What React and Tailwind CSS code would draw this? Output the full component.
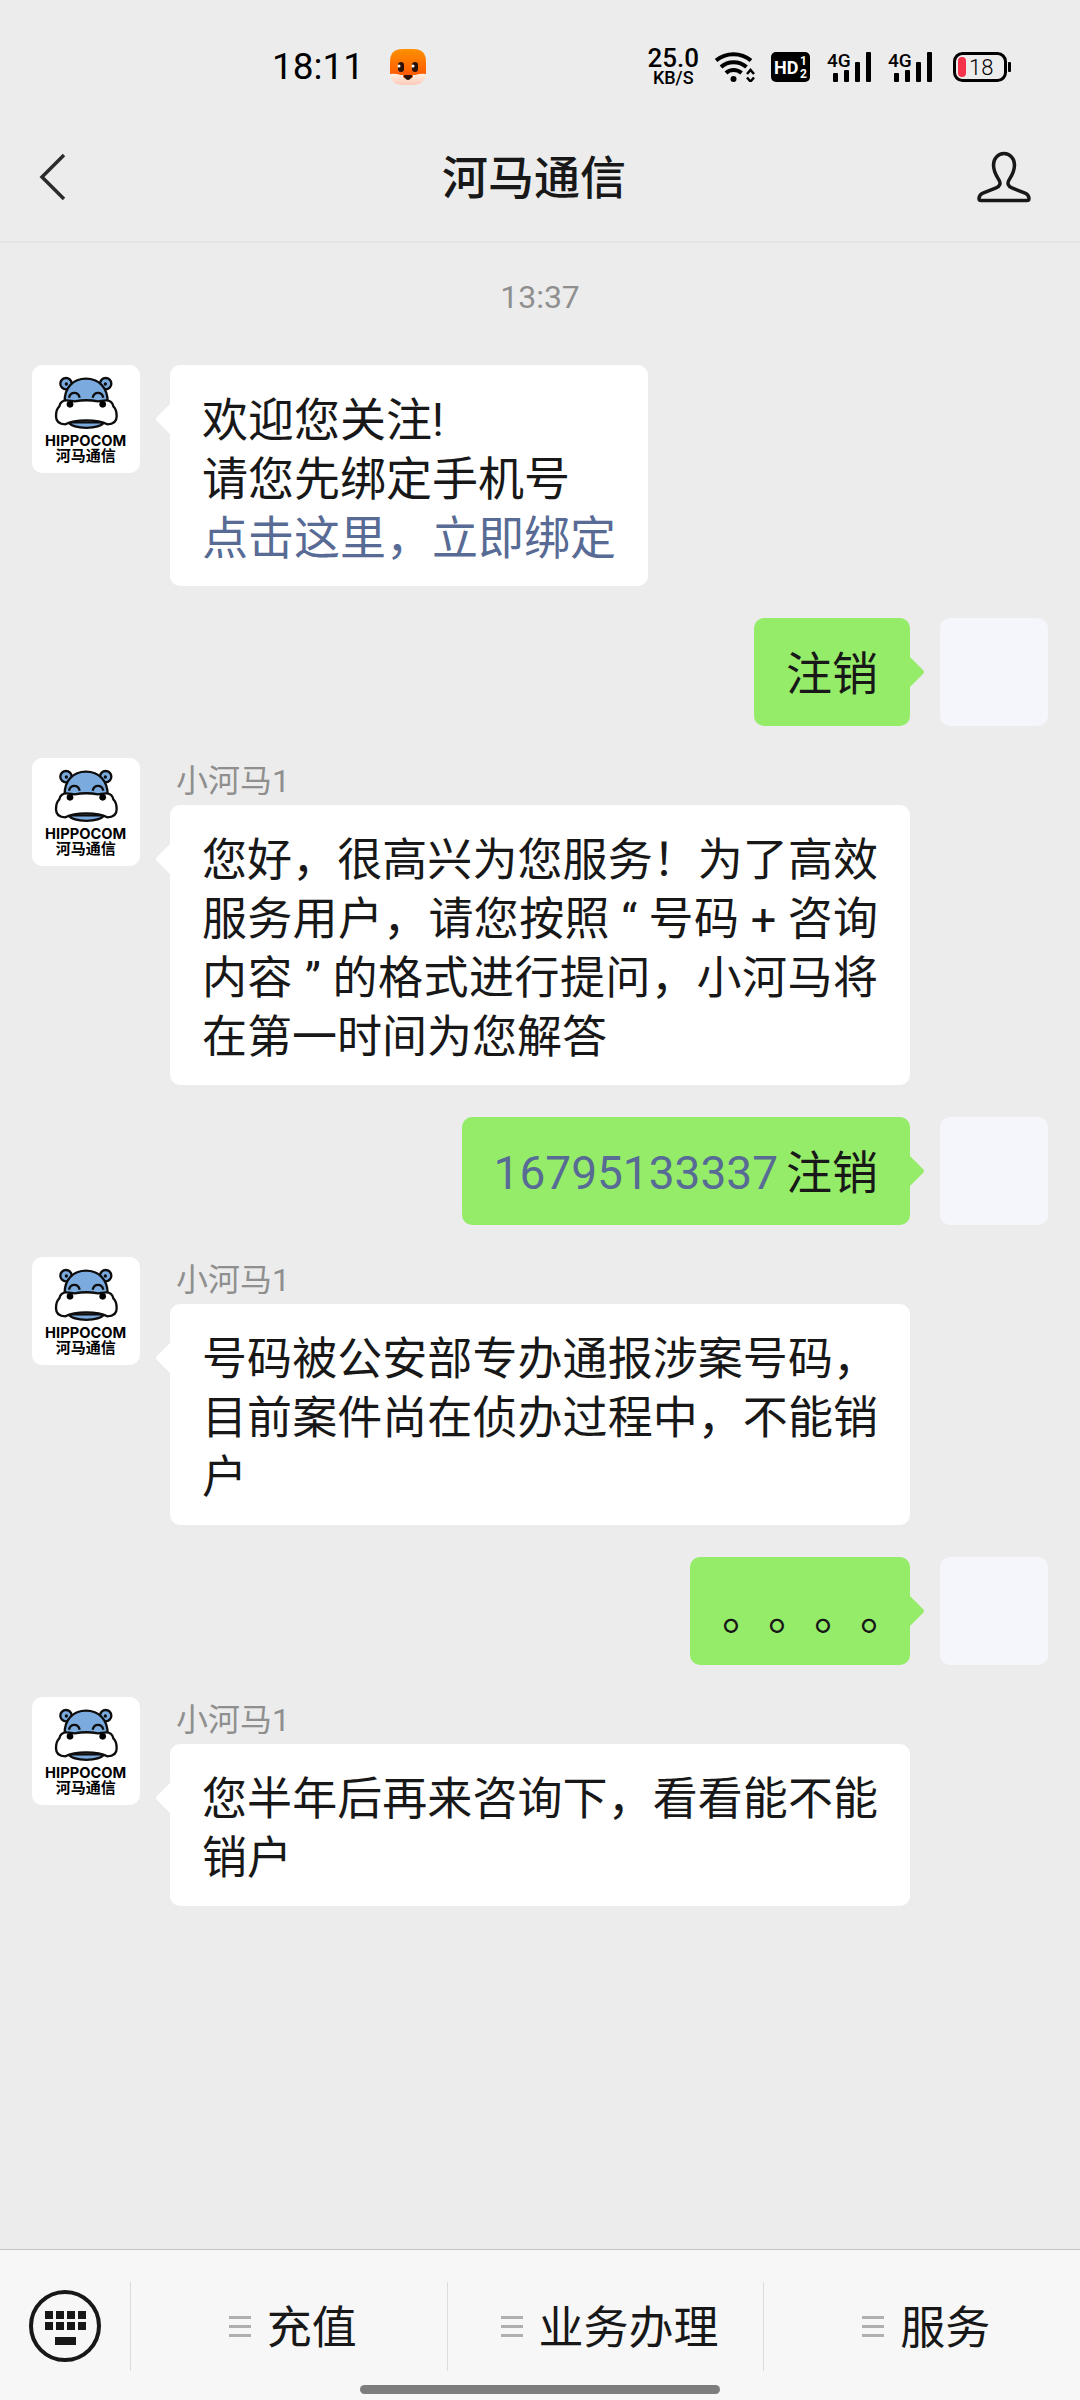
const messages = [
  { id: 1, from: "bot", lines: ["欢迎您关注!", "请您先绑定手机号"], link: "点击这里，立即绑定" },
  { id: 2, from: "me", text: "注销" },
  {
    id: 3,
    from: "bot",
    name: "小河马1",
    text: "您好，很高兴为您服务！为了高效服务用户，请您按照\u00a0“\u00a0号码\u00a0+\u00a0咨询内容\u00a0”\u00a0的格式进行提问，小河马将在第一时间为您解答",
  },
  { id: 4, from: "me", phone: "16795133337", text: "注销" },
  {
    id: 5,
    from: "bot",
    name: "小河马1",
    text: "号码被公安部专办通报涉案号码，目前案件尚在侦办过程中，不能销户",
  },
  { id: 6, from: "me", dots: "。。。。" },
  { id: 7, from: "bot", name: "小河马1", text: "您半年后再来咨询下，看看能不能销户" },
];

const menus = ["充值", "业务办理", "服务"];

const FoxIcon = () => (
  <svg className="size-9" viewBox="0 0 36 36">
    <defs>
      <linearGradient id="fox" x1="0" y1="0" x2="0" y2="1">
        <stop offset="0" stopColor="#ff9000" />
        <stop offset="1" stopColor="#ff5a00" />
      </linearGradient>
      <linearGradient id="cheek" x1="0" y1="0" x2="0" y2="1">
        <stop offset="0" stopColor="#fff0e2" />
        <stop offset="1" stopColor="#ffc9b8" />
      </linearGradient>
    </defs>
    <path d="M0 26V13C0 4 4 0 13 0h10c9 0 13 4 13 13v13z" fill="url(#fox)" />
    <path d="M13 24h10v5H13z" fill="#ff5a00" />
    <path d="M0 25c6-1 10 0 13 3 2 2 8 2 10 0 3-3 7-4 13-3-1 8-6 11-14 11h-8C6 36 1 33 0 25z" fill="url(#cheek)" />
    <path d="M15 26h6c1 0 1.500 1 1 2-1 1.500-2.500 3-4 3s-3-1.500-4-3c-.5-1 0-2 1-2z" fill="#2a1208" />
    <rect x="8" y="13" width="6" height="10" rx="3" fill="#2a1208" />
    <rect x="22" y="13" width="6" height="10" rx="3" fill="#2a1208" />
    <circle cx="9" cy="17" r="1.500" fill="#fff" />
    <circle cx="23" cy="17" r="1.500" fill="#fff" />
  </svg>
);

const WifiIcon = () => (
  <svg className="h-[30px] w-10" viewBox="0 0 40 30" fill="none" stroke="#000" strokeWidth="4">
    <path d="M1 8.500C11 0 26 0 36 8.500" />
    <path d="M6 15C13 8.500 24 8.500 31.500 15" />
    <path d="M11 21C15 17 22 17 26.500 21" />
    <circle cx="18.500" cy="27" r="3" fill="#000" stroke="none" />
    <path d="M32 22l3.500-4 3.500 4M32 25.500l3.500 4 3.500-4" strokeWidth="2.500" />
  </svg>
);

const HdIcon = () => (
  <svg className="h-[30px] w-10" viewBox="0 0 40 30">
    <rect width="39" height="30" rx="5" />
    <g fill="#fff" className="font-['Roboto',sans-serif] font-bold">
      <text x="3" y="22" fontSize="18">HD</text>
      <text x="29" y="13" fontSize="12">1</text>
      <text x="29" y="26" fontSize="12">2</text>
    </g>
  </svg>
);

const SignalIcon = () => (
  <svg className="h-[30px] w-[45px] overflow-visible" viewBox="0 0 45 30">
    <text x="0" y="15" fontSize="19" className="font-['Roboto',sans-serif] font-medium">4G</text>
    <rect x="6" y="21" width="5" height="9" rx="1" />
    <rect x="17" y="18" width="5" height="12" rx="1" />
    <rect x="28" y="10" width="5" height="20" rx="1" />
    <rect x="39" y="0" width="5" height="30" rx="1" />
  </svg>
);

const BatteryIcon = () => (
  <svg className="h-[30px] w-[58px]" viewBox="0 0 58 30">
    <rect x="1.500" y="1.500" width="51" height="27" rx="8" fill="none" stroke="#000" strokeWidth="3" />
    <rect x="5" y="5" width="8" height="20" rx="4" fill="#f5334a" />
    <rect x="55" y="10" width="3" height="10" rx="1" />
    <text x="16" y="23" fontSize="22" className="font-['Roboto',sans-serif] font-light">18</text>
  </svg>
);

const HippoLogo = () => (
  <svg className="size-[108px] shrink-0 rounded-[10px] bg-white" viewBox="0 0 324 324">
    <g fill="#7aaade" stroke="#0d0d0d" strokeWidth="7">
      <circle cx="102" cy="56" r="17" />
      <circle cx="221" cy="56" r="17" />
      <path d="M98 112C96 68 124 41 162 41s66 27 65 71z" />
      <path d="M111 98c4-19 28-19 32 0M182 98c4-19 28-19 32 0" fill="none" />
      <circle cx="103" cy="57" r="5" fill="#0d0d0d" stroke="none" />
      <circle cx="220" cy="57" r="5" fill="#0d0d0d" stroke="none" />
      <path d="M108 172C128 194 198 194 218 172z" />
      <path
        d="M104 106C90 106 84 114 82 124 73 132 72 142 72 154 72 170 82 178 100 178 118 168 140 166 163 166 186 166 208 168 226 178 244 178 254 170 254 154 254 142 253 132 244 124 242 114 236 106 222 106 212 106 206 109 198 109 176 105 150 105 128 109 120 109 114 106 104 106z"
        fill="#fff"
      />
    </g>
    <circle cx="114" cy="118" r="10" />
    <circle cx="212" cy="118" r="10" />
    <text x="161" y="243" fontSize="44" textAnchor="middle" className="font-['Inter',sans-serif] font-bold">
      HIPPOCOM
    </text>
    <text x="161" y="288" fontSize="45" textAnchor="middle" className="font-['Noto_Sans_CJK_SC',sans-serif] font-bold">
      河马通信
    </text>
  </svg>
);

const KeyboardIcon = () => (
  <svg className="size-[74px]" viewBox="0 0 74 74" fill="#181818">
    <circle cx="37" cy="36" r="34" fill="none" stroke="#181818" strokeWidth="4" />
    {[17, 28, 39, 50].map((x) => (
      <g key={x}>
        <rect x={x} y="21" width="8" height="8" />
        <rect x={x} y="32" width="8" height="8" />
      </g>
    ))}
    <rect x="27" y="47" width="21" height="8" />
  </svg>
);

const Tail = ({ mine }) => (
  <svg
    className={mine ? "absolute left-full top-[38px] h-8 w-[14px]" : "absolute right-full top-[38px] h-8 w-[14px]"}
    viewBox="0 0 14 32"
  >
    {mine ? (
      <path d="M0 1L13 14q2 2 0 4L0 31z" fill="#95ec69" />
    ) : (
      <path d="M14 1L1 14q-2 2 0 4L14 31z" fill="#fff" />
    )}
  </svg>
);

const BotMessage = ({ name, lines, link, text }) => (
  <div className="flex items-start gap-[30px] pr-[138px]">
    <HippoLogo />
    <div className="min-w-0">
      {name && <div className="h-[47px] pl-1.5 text-[32px] leading-[46px] text-[#8f8f8f]">{name}</div>}
      <div className="relative min-h-[108px] w-fit rounded-[10px] bg-white px-8 pb-[18px] pt-[26px]">
        <Tail />
        {lines ? (
          <div className="text-[46px] leading-[59px]">
            {lines.map((line) => (
              <p key={line}>{line}</p>
            ))}
            <a href="#bind" className="text-[#576b95]">
              {link}
            </a>
          </div>
        ) : (
          <p className="text-justify text-[45px] leading-[59px]">{text}</p>
        )}
      </div>
    </div>
  </div>
);

const MyMessage = ({ phone, text, dots }) => (
  <div className="flex items-start justify-end gap-[30px]">
    <div className="relative flex h-[108px] items-center rounded-[10px] bg-[#95ec69] px-8 pt-1 text-[46px] leading-[59px]">
      {phone && (
        <a href={`tel:${phone}`} className="mr-2 text-[#576b95]">
          {phone}
        </a>
      )}
      {text}
      {dots && <span className="-mr-7 [text-spacing-trim:space-all]">{dots}</span>}
      <Tail mine />
    </div>
    <div className="size-[108px] shrink-0 rounded-[10px] bg-[#f5f6fb]" />
  </div>
);

export default function App() {
  return (
    <div
      lang="zh-CN"
      className="flex min-h-screen flex-col bg-[#ececec] font-['Roboto','Noto_Sans_CJK_SC',sans-serif] text-[#181818]"
    >
      {/* Status bar */}
      <div className="flex h-28 items-center pl-[272px] pr-[69px] pt-[22px] text-black">
        <span className="text-[37px]">18:11</span>
        <div className="ml-[26px]">
          <FoxIcon />
        </div>
        <div className="ml-auto flex items-center gap-4">
          <div className="text-center font-medium">
            <div className="text-[26px] leading-[22px]">25.0</div>
            <div className="text-[18px] leading-[18px]">KB/S</div>
          </div>
          <WifiIcon />
          <HdIcon />
          <SignalIcon />
          <SignalIcon />
          <div className="ml-1">
            <BatteryIcon />
          </div>
        </div>
      </div>

      {/* Title bar */}
      <header className="flex h-[131px] items-center justify-between border-b-2 border-[#e5e5e5] pl-9 pr-12">
        <button aria-label="返回" className="w-14">
          <svg className="h-12 w-8" viewBox="0 0 32 48" fill="none" stroke="#2b2b2b" strokeWidth="3.500">
            <path d="M28 2L6 24l22 22" />
          </svg>
        </button>
        <h1 className="pt-1 text-[46px] font-medium">河马通信</h1>
        <button aria-label="公众号资料">
          <svg className="h-[52px] w-14" viewBox="0 0 56 52" fill="none" stroke="#181818" strokeWidth="3.500">
            <path d="M28 2.500c-6 0-10.500 5-10.500 11.500 0 7 3 11 5.500 15 2 3.500 1 6-3 8L7 42c-3 1.500-4 3-4 5.500 0 1.500.5 2 2 2h46c1.500 0 2-.5 2-2 0-2.500-1-4-4-5.500l-13-5c-4-2-5-4.500-3-8 2.500-4 5.500-8 5.500-15C38.500 7.500 34 2.500 28 2.500z" />
          </svg>
        </button>
      </header>

      <main className="flex flex-1 flex-col gap-8 px-8 pt-8">
        <time className="mb-3.5 text-center text-[32px] leading-[44px] text-[#8f8f8f]">13:37</time>
        {messages.map(({ id, from, ...rest }) =>
          from === "me" ? <MyMessage key={id} {...rest} /> : <BotMessage key={id} {...rest} />
        )}
      </main>

      {/* Bottom menu */}
      <footer className="border-t border-[#c4c4c4] bg-[#f7f7f7] pb-1.5 pt-8">
        <div className="flex h-[89px] items-stretch">
          <button aria-label="键盘" className="flex w-[130px] items-center justify-center">
            <KeyboardIcon />
          </button>
          {menus.map((menu) => (
            <button
              key={menu}
              className="flex flex-1 items-center justify-center gap-4 border-l border-[#dcdcdc] pl-2 text-[45px]"
            >
              <span className="flex w-[22px] flex-col gap-1.5">
                <span className="h-[3px] bg-[#b0b0b0]" />
                <span className="h-[3px] bg-[#b0b0b0]" />
                <span className="h-[3px] bg-[#b0b0b0]" />
              </span>
              <span className="pt-1">{menu}</span>
            </button>
          ))}
        </div>
        <div className="mx-auto mt-3.5 h-[9px] w-1/3 rounded-full bg-[#7d7d7d]" />
      </footer>
    </div>
  );
}
